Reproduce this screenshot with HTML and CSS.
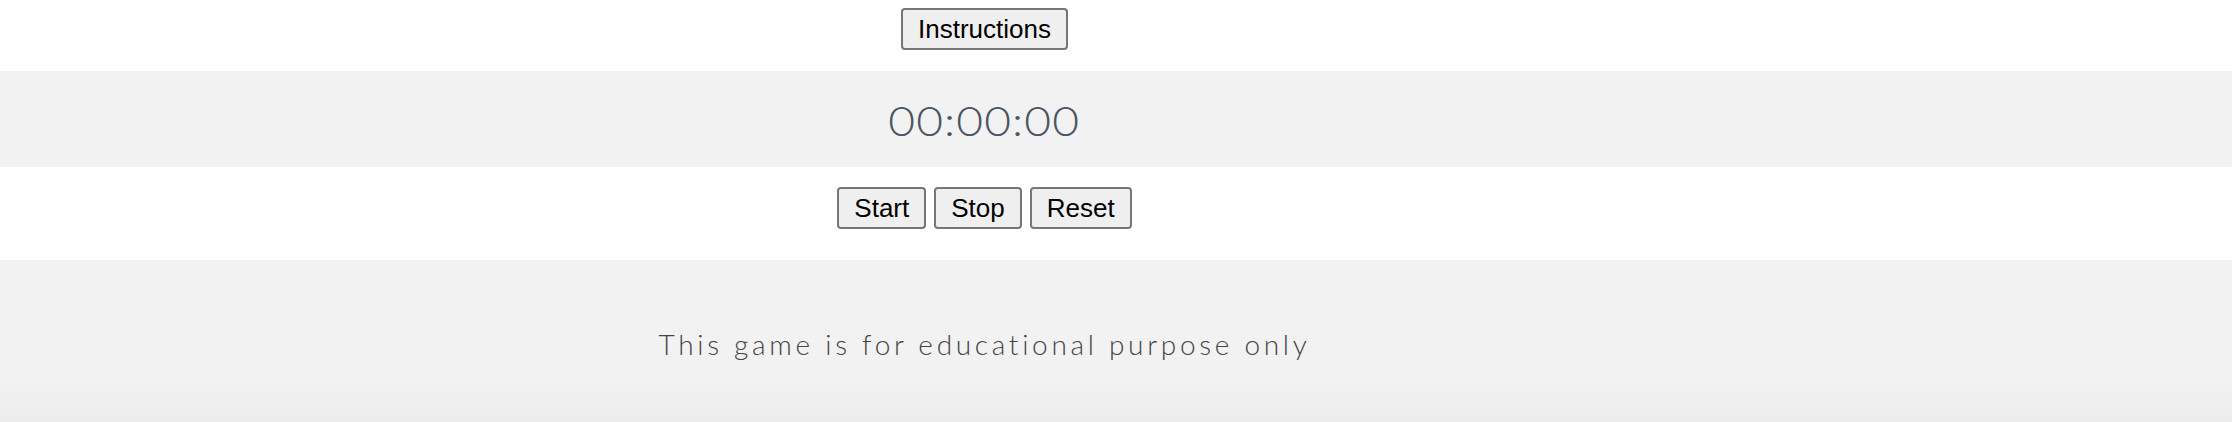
FILE: index.html
```html
<!DOCTYPE html>
<html>
<head>
<meta charset="utf-8">
<link rel="stylesheet" href="styles.css">
</head>
<body>
<div class="top">
  <div class="inner"><button class="btn">Instructions</button></div>
</div>
<div class="timer-band">
  <div class="inner"><span class="timer">00:00:00</span></div>
</div>
<div class="controls">
  <div class="inner row">
    <button class="btn">Start</button>
    <button class="btn">Stop</button>
    <button class="btn">Reset</button>
  </div>
</div>
<div class="footer">
  <div class="inner"><p class="note">This game is for educational purpose only</p></div>
</div>
</body>
</html>
```
FILE: styles.css
```css
html, body {
  margin: 0;
  padding: 0;
  background: #ffffff;
}
.inner {
  width: 1969px;
  display: flex;
  justify-content: center;
  align-items: center;
}
.top {
  height: 71px;
}
.top .inner {
  padding-top: 8px;
}
.btn {
  font-family: "Liberation Sans", Arial, sans-serif;
  font-size: 26px;
  height: 42px;
  padding: 0 15px;
  margin: 0;
  background: #efefef;
  color: #000;
  border: 2px solid #767676;
  border-radius: 4px;
  box-sizing: border-box;
  line-height: 1;
}
.timer-band {
  height: 96px;
  background: #f2f2f2;
}
.timer-band .inner {
  height: 96px;
}
.timer {
  font-family: Lato, "Open Sans", sans-serif;
  font-weight: 300;
  font-size: 42px;
  letter-spacing: 1px;
  color: #4a5566;
  display: inline-block;
  transform: scaleX(1.1);
  padding-top: 2px;
}
.controls {
  height: 93px;
}
.controls .inner {
  height: 93px;
  gap: 8px;
  align-items: flex-start;
  padding-top: 20px;
  box-sizing: border-box;
}
.footer {
  height: 162px;
  background: linear-gradient(to bottom, #f2f2f2 0, #f2f2f2 120px, #ececec 162px);
}
.footer .inner {
  height: 162px;
}
.note {
  margin: 0;
  padding-top: 6px;
  font-family: Lato, sans-serif;
  font-weight: 300;
  font-size: 28px;
  letter-spacing: 3.7px;
  color: #444444;
}
```
